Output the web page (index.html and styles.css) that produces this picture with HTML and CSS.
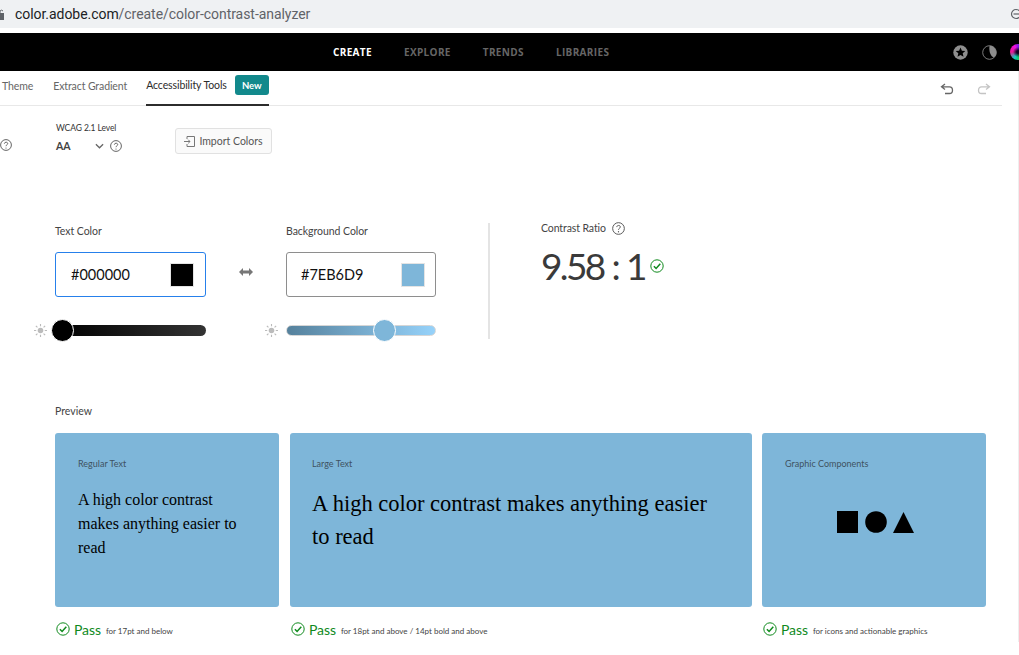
FILE: index.html
```html
<!DOCTYPE html>
<html lang="en">
  <head>
    <meta charset="UTF-8" />
    <meta name="viewport" content="width=device-width, initial-scale=1.0" />
    <title>Color Contrast Analyzer</title>
    <link rel="stylesheet" href="styles.css">
  </head>
  <body>
    <svg class="sprites" width="0" height="0" aria-hidden="true">
      <symbol id="help" viewBox="0 0 12 12">
        <circle cx="6" cy="6" r="5.4" fill="none" stroke="#555" stroke-width="0.9" />
        <path d="M4.4 4.7c0-2 3.3-2 3.3-.1 0 1.2-1.7 1.2-1.7 2.6" fill="none" stroke="#555" stroke-width="0.9" />
        <circle cx="6" cy="9" r="0.6" fill="#555" />
      </symbol>
      <symbol id="check" viewBox="0 0 14 14">
        <circle cx="7" cy="7" r="6.2" fill="none" stroke="#0f8a1d" stroke-width="1" />
        <path d="M3.9 7.2l2.2 2.3 4.2-4.8" fill="none" stroke="#0f8a1d" stroke-width="1.5" />
      </symbol>
      <symbol id="sun" viewBox="0 0 14 14">
        <circle cx="7" cy="7" r="3" fill="#bbb" />
        <path d="M7 0v2.4M7 11.6V14M0 7h2.4M11.6 7H14M2 2l1.7 1.7M10.3 10.3L12 12M12 2l-1.7 1.7M3.7 10.3L2 12" stroke="#bbb" stroke-width="1.2" />
      </symbol>
    </svg>

    <div class="urlbar">
      <svg class="lock" width="4" height="11" viewBox="0 0 4 11"><rect y="4" width="4" height="7" fill="#5f6368" /><path d="M0 4V2a2 2 0 0 1 3 0" fill="none" stroke="#5f6368" /></svg>
      <span class="url"><span class="url-host">color.adobe.com</span>/create/color-contrast-analyzer</span>
      <svg class="zoom-icon" width="9" height="12" viewBox="0 0 9 12"><circle cx="6" cy="6" r="4.5" fill="none" stroke="#5f6368" stroke-width="1.2" /><path d="M3.5 6H9" stroke="#5f6368" stroke-width="1.2" /></svg>
    </div>

    <header class="topnav">
      <nav class="topnav-links">
        <a class="topnav-link active">CREATE</a>
        <a class="topnav-link">EXPLORE</a>
        <a class="topnav-link">TRENDS</a>
        <a class="topnav-link">LIBRARIES</a>
      </nav>
      <div class="topnav-icons">
        <svg width="15" height="15" viewBox="0 0 15 15"><circle cx="7.5" cy="7.5" r="7.2" fill="#8e8e8e" /><path d="M7.5 2.6l1.4 3.2 3.4.3-2.6 2.2.8 3.400-3-1.800-3 1.800.8-3.400-2.600-2.200 3.400-.3z" fill="#000" /></svg>
        <svg width="15" height="15" viewBox="0 0 15 15"><circle cx="7.5" cy="7.5" r="6.8" fill="#000" stroke="#999" stroke-width="0.8" /><path d="M7.500.7a6.800 6.800 0 0 1 4.600 11.800C8.500 11.500 6.800 6.500 7.500.7z" fill="#8e8e8e" /></svg>
        <div class="color-wheel"></div>
      </div>
    </header>

    <div class="tabs">
      <a class="tab tab-theme">Theme</a>
      <a class="tab tab-gradient">Extract Gradient</a>
      <a class="tab tab-active">Accessibility Tools <span class="badge">New</span></a>
      <div class="history">
        <svg width="14" height="12" viewBox="0 0 14 12"><path d="M5 1L1.500 3.800 5 6.500M1.500 3.800h8c4 0 4 6.700 0 6.700H5" fill="none" stroke="#666" stroke-width="1.300" /></svg>
        <svg width="14" height="12" viewBox="0 0 14 12"><path d="M9 1l3.500 2.800L9 6.500M12.500 3.800h-8c-4 0-4 6.700 0 6.700H9" fill="none" stroke="#c4c4c4" stroke-width="1.300" /></svg>
      </div>
    </div>

    <section class="level-row">
      <svg class="help first-help" width="12" height="12"><use href="#help" /></svg>
      <div class="level">
        <div class="level-label">WCAG 2.1 Level</div>
        <div class="level-value">
          <span class="level-aa">AA</span>
          <svg width="9" height="6" viewBox="0 0 10 6"><path d="M1 1l4 4 4-4" fill="none" stroke="#666" stroke-width="1.400" /></svg>
          <svg class="help" width="12" height="12"><use href="#help" /></svg>
        </div>
      </div>
      <button class="import-btn">
        <svg width="11" height="11" viewBox="0 0 11 11"><path d="M3 3V.5h7.500v10H3V8M0 5.500h6M4.200 3.700L6 5.500 4.200 7.300" fill="none" stroke="#777" /></svg>
        Import Colors
      </button>
    </section>

    <section class="colors">
      <div class="color-field">
        <label class="field-label">Text Color</label>
        <div class="color-input focused"><span>#000000</span><i class="swatch swatch-black"></i></div>
        <div class="slider-row">
          <svg class="sun" width="13" height="13"><use href="#sun" /></svg>
          <div class="slider slider-black"><i class="thumb thumb-black"></i></div>
        </div>
      </div>
      <div class="swap">
        <svg width="14" height="8" viewBox="0 0 14 8"><path d="M0 4l4-4v2.500h6V0l4 4-4 4V5.500H4V8z" fill="#777" /></svg>
      </div>
      <div class="color-field field-bg">
        <label class="field-label">Background Color</label>
        <div class="color-input"><span>#7EB6D9</span><i class="swatch swatch-blue"></i></div>
        <div class="slider-row">
          <svg class="sun" width="13" height="13"><use href="#sun" /></svg>
          <div class="slider slider-blue"><i class="thumb thumb-blue"></i></div>
        </div>
      </div>
      <div class="ratio">
        <div class="ratio-label">Contrast Ratio <svg class="help" width="13" height="13"><use href="#help" /></svg></div>
        <div class="ratio-value"><span class="ratio-num">9.58 : 1</span><svg width="14" height="14"><use href="#check" /></svg></div>
      </div>
    </section>

    <section class="preview">
      <div class="preview-label">Preview</div>
      <div class="cards">
        <div class="card-col col-regular">
          <div class="card">
            <div class="card-title">Regular Text</div>
            <p class="sample sample-regular">A high color contrast makes anything easier to read</p>
          </div>
          <div class="result"><svg width="14" height="14"><use href="#check" /></svg><span class="pass">Pass</span><span class="note">for 17pt and below</span></div>
        </div>
        <div class="card-col col-large">
          <div class="card card-wide">
            <div class="card-title">Large Text</div>
            <p class="sample sample-large">A high color contrast makes anything easier to read</p>
          </div>
          <div class="result"><svg width="14" height="14"><use href="#check" /></svg><span class="pass">Pass</span><span class="note">for 18pt and above / 14pt bold and above</span></div>
        </div>
        <div class="card-col col-graphic">
          <div class="card">
            <div class="card-title">Graphic Components</div>
            <div class="shapes">
              <svg width="77" height="22" viewBox="0 0 77 22"><rect width="21" height="22" /><circle cx="39" cy="11" r="10.800" /><path d="M56 22L66.500 1 77 22z" /></svg>
            </div>
          </div>
          <div class="result"><svg width="14" height="14"><use href="#check" /></svg><span class="pass">Pass</span><span class="note">for icons and actionable graphics</span></div>
        </div>
      </div>
    </section>

    <div class="scroll-edge"></div>
  </body>
</html>
```

FILE: styles.css
```css
* {
  box-sizing: border-box;
}
html,
body {
  margin: 0;
  height: 655px;
  overflow: hidden;
}
body {
  font-family: "Lato", sans-serif;
  color: #444;
  background: #fff;
  position: relative;
}
.sprites {
  position: absolute;
}
.scroll-edge {
  position: absolute;
  right: 0;
  top: 71px;
  width: 1px;
  height: 571px;
  background: #eee;
}

.urlbar {
  height: 28px;
  background: #eff1f3;
  display: flex;
  align-items: center;
  font-family: "Roboto", sans-serif;
  font-size: 14px;
  color: #5f6368;
}
.lock {
  flex: none;
}
.url {
  margin-left: 11px;
  letter-spacing: -0.05px;
}
.url-host {
  color: #202124;
}
.zoom-icon {
  margin-left: auto;
}

.topnav {
  margin-top: 5px;
  height: 38px;
  background: #000;
  display: flex;
  align-items: center;
}
.topnav-links {
  margin-left: 333px;
  display: flex;
  gap: 32px;
}
.topnav-link {
  font-family: "Open Sans", sans-serif;
  font-size: 10px;
  font-weight: 700;
  letter-spacing: 0.35px;
  color: #666;
}
.topnav-link.active {
  color: #fff;
}
.topnav-icons {
  margin-left: auto;
  display: flex;
  align-items: center;
  gap: 14px;
  margin-right: -7px;
}
.topnav-icons svg {
  position: relative;
  left: 1px;
}
.color-wheel {
  width: 16px;
  height: 16px;
  border-radius: 50%;
  background: radial-gradient(circle, #102 0 12%, transparent 45%),
    conic-gradient(from 270deg, #e81890, #f010e0, #2020f0, #10c0a0, #10c020, #10d0c0, #e81890);
}

.tabs {
  height: 35px;
  width: 1002px;
  border-bottom: 1px solid #e8e8e8;
  display: flex;
  font-size: 10.5px;
  letter-spacing: -0.1px;
  position: relative;
}
.tab {
  display: flex;
  align-items: center;
  height: 34px;
  color: #666;
  padding-bottom: 5px;
}
.tab-theme {
  margin-left: 2px;
}
.tab-gradient {
  margin-left: 20px;
}
.tab-active {
  margin-left: 19px;
  color: #2c2c2c;
  height: 35px;
  border-bottom: 2px solid #2c2c2c;
  padding-bottom: 5px;
  gap: 8px;
}
.badge {
  background: #12898c;
  color: #fff;
  font-size: 9.5px;
  font-weight: 700;
  width: 34px;
  height: 20px;
  border-radius: 3px;
  display: flex;
  align-items: center;
  justify-content: center;
}
.history {
  margin-left: auto;
  margin-top: 12px;
  margin-right: 11px;
  display: flex;
  gap: 23px;
}
.history svg {
  display: block;
}

.level-row {
  display: flex;
  align-items: flex-start;
  height: 116px;
}
.first-help {
  margin-top: 33px;
  flex: none;
}
.level {
  margin-left: 44px;
  margin-top: 16px;
  width: 119px;
}
.level-label {
  font-size: 8.5px;
  line-height: 12px;
  letter-spacing: -0.1px;
  color: #333;
}
.level-value {
  display: flex;
  align-items: center;
  height: 14px;
  margin-top: 5px;
  gap: 6px;
}
.level-aa {
  font-size: 10.5px;
  font-weight: 700;
  width: 33px;
}
.import-btn {
  margin-top: 22px;
  width: 97px;
  height: 26px;
  padding: 0;
  background: #fafafa;
  border: 1px solid #e1e1e1;
  border-radius: 3px;
  font-family: inherit;
  font-size: 10.5px;
  color: #555;
  display: flex;
  align-items: center;
  justify-content: center;
  gap: 4px;
}

.colors {
  display: flex;
  padding-left: 55px;
  height: 182px;
}
.color-field {
  width: 151px;
  flex: none;
}
.field-bg {
  width: 150px;
}
.field-label {
  display: block;
  font-size: 10.5px;
  letter-spacing: -0.05px;
  line-height: 14px;
  height: 28px;
  margin-top: 2px;
}
.color-input {
  height: 45px;
  border: 1px solid #8e8e8e;
  border-radius: 3px;
  display: flex;
  align-items: center;
  justify-content: space-between;
  padding: 0 11px 0 15px;
  font-size: 14.5px;
  color: #111;
}
.field-bg .color-input {
  padding: 0 10px 0 14px;
}
.color-input.focused {
  border-color: #2680eb;
}
.swatch {
  width: 24px;
  height: 24px;
  border: 1px solid #e4e4e4;
}
.swatch-black {
  background: #000;
}
.swatch-blue {
  background: #7eb6d9;
}
.slider-row {
  position: relative;
  margin-top: 28px;
}
.sun {
  position: absolute;
  left: -21px;
  top: -1px;
}
.slider {
  height: 11px;
  border-radius: 6px;
  position: relative;
}
.slider-black {
  background: linear-gradient(90deg, #000, #333);
}
.slider-blue {
  background: linear-gradient(90deg, #55819c, #96d2fa);
  border: 1px solid #d6d6d6;
}
.thumb {
  position: absolute;
  top: -6px;
  width: 23px;
  height: 23px;
  border-radius: 50%;
  border: 1px solid #fff;
}
.thumb-black {
  left: -4px;
  background: #000;
}
.thumb-blue {
  left: 86px;
  background: #7eb6d9;
  top: -7px;
}
.swap {
  width: 80px;
  flex: none;
  display: flex;
  justify-content: center;
  padding-top: 46px;
}
.swap svg {
  display: block;
}
.ratio {
  margin-left: 52px;
  margin-top: 1px;
  border-left: 2px solid #e4e4e4;
  height: 116px;
  padding-left: 51px;
}
.ratio-label {
  font-size: 10.5px;
  letter-spacing: -0.1px;
  display: flex;
  align-items: center;
  gap: 6px;
  line-height: 14px;
  margin-top: -2px;
}
.ratio-value {
  line-height: 46px;
  margin-top: 8px;
  display: flex;
  align-items: center;
  gap: 5px;
}
.ratio-num {
  font-size: 37px;
  letter-spacing: -2.6px;
  word-spacing: 1px;
  color: #3a3a3a;
  white-space: pre;
}

.preview {
  padding-left: 55px;
}
.preview-label {
  font-size: 10.5px;
  line-height: 14px;
  height: 29px;
}
.cards {
  display: flex;
  gap: 11px;
}
.col-regular {
  width: 224px;
}
.col-large {
  width: 462px;
}
.col-graphic {
  width: 224px;
  margin-left: -1px;
}
.card {
  height: 174px;
  background: #7eb6d9;
  border-radius: 3px;
  padding: 24px 23px;
}
.card-wide {
  padding: 24px 30px 24px 22px;
}
.card-title {
  font-size: 9px;
  line-height: 14px;
  color: #3f5261;
}
.sample {
  margin: 0;
  color: #000;
  font-family: "Liberation Serif", serif;
}
.sample-regular {
  font-size: 16px;
  line-height: 24px;
  margin-top: 17px;
  max-width: 170px;
}
.sample-large {
  font-size: 22.5px;
  line-height: 33px;
  margin-top: 16px;
}
.shapes {
  display: flex;
  justify-content: center;
  margin-top: 40px;
  padding-left: 2px;
}
.shapes svg {
  display: block;
}
.result {
  display: flex;
  align-items: center;
  margin-top: 14px;
  height: 16px;
  padding-left: 1px;
}
.pass {
  color: #0f8a1d;
  font-size: 14px;
  letter-spacing: -0.1px;
  margin-left: 4px;
}
.note {
  font-size: 8px;
  margin-left: 5px;
  margin-top: 3px;
  color: #444;
}
```
